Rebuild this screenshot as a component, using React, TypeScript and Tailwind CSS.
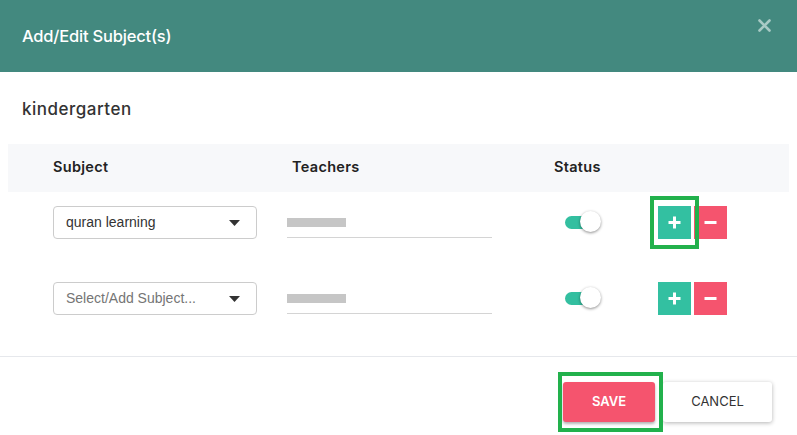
import React from "react";

const poppins = { fontFamily: "Inter, 'Noto Sans', sans-serif" };

function Caret() {
  return (
    <svg width="11" height="6" viewBox="0 0 11 6" className="shrink-0">
      <path d="M0 0 L11 0 L5.5 6 Z" fill="#333" />
    </svg>
  );
}

function Toggle() {
  return (
    <div className="relative w-[36px] h-[22px] flex items-center">
      <div className="w-[30px] h-[13px] rounded-full bg-[#33bfa0]" />
      <div className="absolute left-[15px] top-[0px] w-[21px] h-[21px] rounded-full bg-white shadow-[0_1px_3px_rgba(0,0,0,0.45)]" />
    </div>
  );
}

function PlusBtn() {
  return (
    <button className="w-[33px] h-[33px] bg-[#33c0a1] flex items-center justify-center">
      <svg width="13" height="13" viewBox="0 0 13 13">
        <path d="M6.5 0.5 V12.5 M0.5 6.5 H12.5" stroke="#fff" strokeWidth="3" />
      </svg>
    </button>
  );
}

function MinusBtn() {
  return (
    <button className="w-[33px] h-[33px] bg-[#f5546e] flex items-center justify-center">
      <svg width="13" height="13" viewBox="0 0 13 13">
        <path d="M0.5 6.5 H12.5" stroke="#fff" strokeWidth="3" />
      </svg>
    </button>
  );
}

function Row({ value, placeholder, highlight }: { value?: string; placeholder?: string; highlight?: boolean }) {
  return (
    <div className="h-[76px] flex items-start pt-[14px] pl-[45px]">
      <div className="w-[234px] shrink-0">
        <div className="w-[204px] h-[33px] border border-[#cccccc] rounded-[4px] flex items-center justify-between pl-[12px] pr-[16px]" style={{ fontFamily: "'Liberation Sans', Arial, sans-serif" }}>
          {value ? (
            <span className="text-[14px] text-[#333]">{value}</span>
          ) : (
            <span className="text-[14px] text-[#757575]">{placeholder}</span>
          )}
          <Caret />
        </div>
      </div>
      <div className="w-[267px] shrink-0">
        <div className="w-[205px] h-[32px] border-b border-[#d4d4d4] flex items-center">
          <div className="w-[59px] h-[9px] bg-[#c6c6c6] mt-[2px]" />
        </div>
      </div>
      <div className="w-[104px] shrink-0 pl-[11px] pt-[5px]">
        <Toggle />
      </div>
      <div className="relative flex gap-[3px]">
        <PlusBtn />
        <MinusBtn />
        {highlight && (
          <div className="absolute left-[-8px] top-[-10px] w-[49px] h-[53px] border-[4px] border-[#22b14c]" />
        )}
      </div>
    </div>
  );
}

export default function App() {
  return (
    <div className="w-[797px] h-[435px] bg-white overflow-hidden relative">
      <div className="h-[72px] bg-[#43897f] flex items-center justify-between pl-[22px] pr-[26px]">
        <h1 className="text-white text-[16.5px] font-medium tracking-[-0.2px]" style={poppins}>Add/Edit Subject(s)</h1>
        <svg width="13" height="13" viewBox="0 0 13 13" className="mb-[22px]">
          <path d="M1.5 1.5 L11.5 11.5 M11.5 1.5 L1.5 11.5" stroke="#a8cac5" strokeWidth="2.6" strokeLinecap="round" />
        </svg>
      </div>
      <div className="pt-[25px] pl-[22px] h-[72px]">
        <div className="text-[17px] font-medium text-[#333] tracking-[0.5px]" style={poppins}>kindergarten</div>
      </div>
      <div className="px-[8px]">
        <div className="h-[48px] bg-[#f7f8fa] flex items-center pl-[45px] pb-[3px] text-[14.5px] font-semibold text-[#222] tracking-[0.3px]" style={poppins}>
          <div className="w-[234px] shrink-0">Subject</div>
          <div className="w-[267px] shrink-0 pl-[5px]">Teachers</div>
          <div>Status</div>
        </div>
        <Row value="quran learning" highlight />
        <Row placeholder="Select/Add Subject..." />
      </div>
      <div className="mt-[12px] border-t border-[#e6e8ec] flex justify-end pt-[25px] pr-[25px] gap-[8px]">
        <div className="relative">
          <button className="w-[92px] h-[40px] bg-[#f5546e] text-white text-[13px] font-semibold rounded-[3px] shadow-[0_2px_3px_rgba(0,0,0,0.3)]" style={poppins}>SAVE</button>
          <div className="absolute left-[-5px] top-[-10px] w-[105px] h-[60px] border-[4px] border-[#22b14c]" />
        </div>
        <button className="w-[109px] h-[40px] bg-white text-[#333] text-[13px] rounded-[3px] shadow-[0_1px_4px_rgba(0,0,0,0.3)]" style={poppins}>CANCEL</button>
      </div>
    </div>
  );
}
